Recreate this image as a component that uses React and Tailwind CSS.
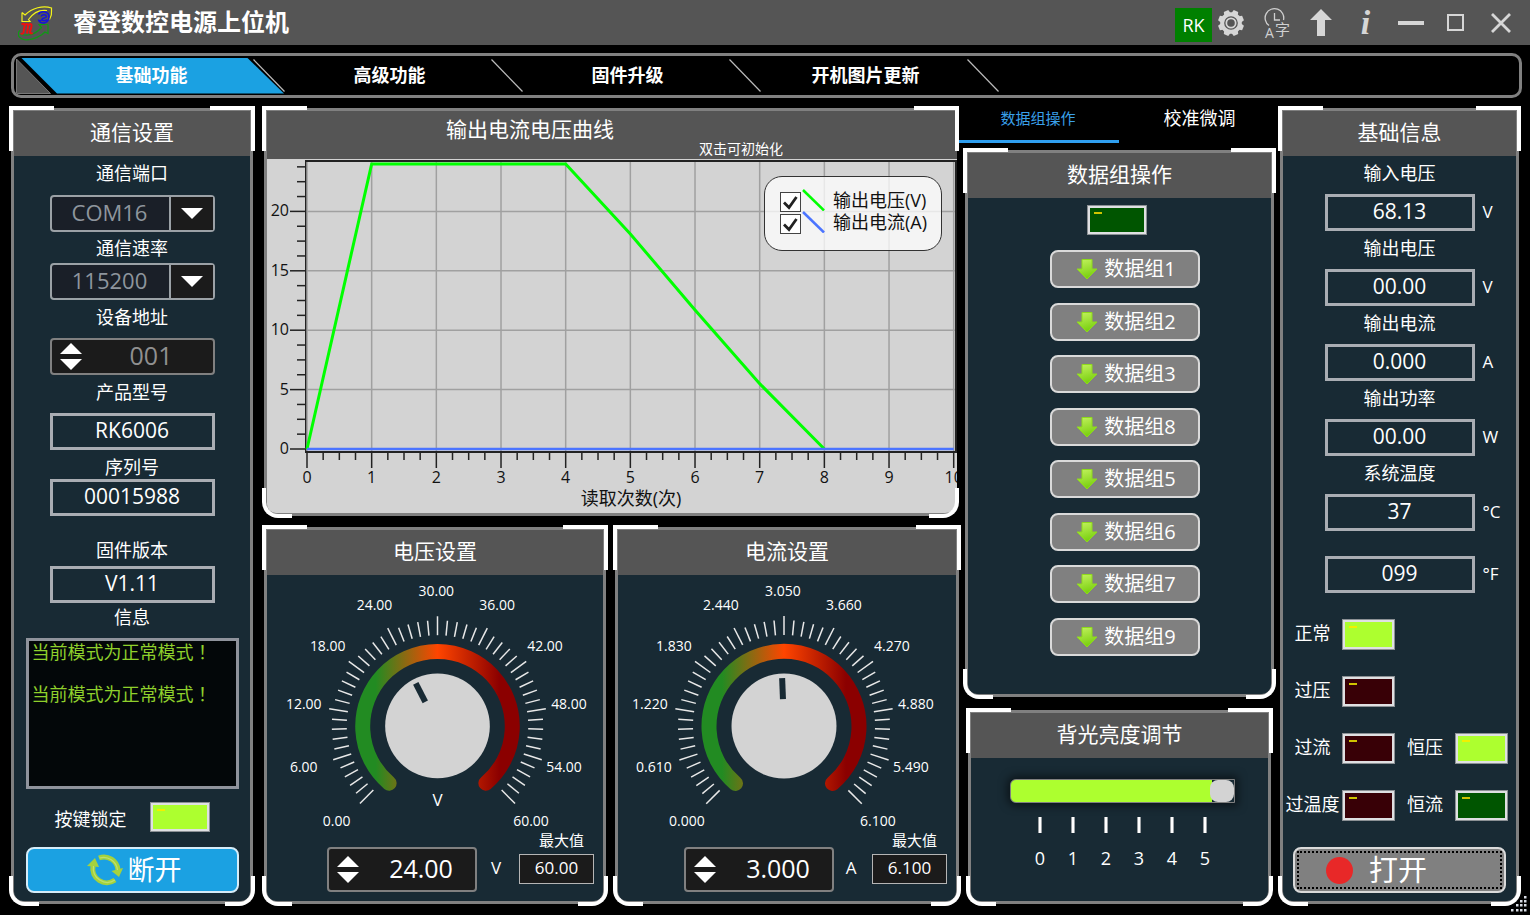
import React, { useState } from "react";

const tabs = ["基础功能", "高级功能", "固件升级", "开机图片更新"];
const groups = [1, 2, 3, 8, 5, 6, 7, 9];

const readings = [
  { id: "vin", label: "输入电压", value: "68.13", unit: "V" },
  { id: "vout", label: "输出电压", value: "00.00", unit: "V" },
  { id: "iout", label: "输出电流", value: "0.000", unit: "A" },
  { id: "pout", label: "输出功率", value: "00.00", unit: "W" },
  { id: "temp", label: "系统温度", value: "37", unit: "°C" },
];

const voltageCurve = [
  [0, 0], [1, 24], [2, 24], [3, 24], [4, 24], [5, 18.1], [6, 11.7], [7, 5.5], [8, 0],
];

/* ---------- icons ---------- */

const Logo = () => (
  <svg viewBox="0 0 36 36" className="w-9 h-9 shrink-0" fill="none" strokeWidth="1.2">
    <path d="M4 7.5V16.5H12L10.5 14.5C15 8 22 4.5 29 5.5M4 7.5L7 10C14 3 25 0 33.5 3V6C34 9 33 12 31.5 14.5" stroke="#f4f41a" />
    <path d="M30 19.5V28.5L27 27C21 33 8 37 3 33.5C-1 31 0 27 2 25.5M30 19.5H21L23.5 22.5C19 28 12 31.5 2.5 29.5" stroke="#0f9a14" />
    <path d="M20.5 9.5C21.5 6.5 27 5.5 30 8.5C32.5 12 30.5 17 26.5 18C23 18.5 20.5 16.5 20.5 14.5M23 11.5C24 9 28 9 28.5 11.5C28.5 13.5 24 12.5 24 14.5C25 16.5 28 15.5 29 14.5M21 17L24 14.5" stroke="#1414dc" strokeWidth="1.5" />
    <path d="M3.5 19.5C6 18 7 19 6.5 21.5L5.5 27.5C5 29 3.5 29 3 28M7 20C9 18 10.5 19.5 10 21.5L9 28.5M10.5 20C12.5 18 14 19 13.5 21.5L12 27C12 29 13.5 29 14.5 27.5" stroke="#ec1010" strokeWidth="2" />
  </svg>
);

const Gear = () => (
  <svg viewBox="0 0 28 28" className="w-7 h-7" fill="#d6d6d6">
    {[22.5, 67.5, 112.5, 157.5].map((a) => (
      <path key={a} d="M10.8 4L11.6 1H16.4L17.2 4V24L16.4 27H11.6L10.8 24Z" transform={`rotate(${a} 14 14)`} />
    ))}
    <circle cx="14" cy="14" r="10.8" />
    <circle cx="14" cy="14" r="6.2" fill="none" stroke="#555" strokeWidth="1.3" />
    <circle cx="14" cy="14" r="3.8" fill="#555" />
  </svg>
);

const Language = () => (
  <svg viewBox="0 0 30 36" className="w-[30px] h-9" fill="none" stroke="#d0d0d0" strokeWidth="1.3">
    <path d="M8 20.5A9.3 9.3 0 1 1 22.5 15" />
    <path d="M13.5 8V15H19" />
    <text x="4" y="33" fontSize="14" fill="#d0d0d0" stroke="none">A</text>
    <text x="14" y="30" fontSize="15" fill="#d0d0d0" stroke="none">字</text>
  </svg>
);

const DownArrow = () => (
  <svg viewBox="0 0 22 22" className="w-[22px] h-[22px]">
    <defs>
      <linearGradient id="leaf" x1="0" y1="0" x2="0.3" y2="1">
        <stop offset="0" stopColor="#c4f260" />
        <stop offset="1" stopColor="#7ad010" />
      </linearGradient>
    </defs>
    <path d="M6 1.5H16V11H21L11 21L1 11H6Z" fill="url(#leaf)" stroke="#8edb1a" />
  </svg>
);

const Refresh = () => (
  <svg viewBox="0 0 36 32" className="w-9 h-8" fill="none">
    <path d="M28 26A14 14 0 0 1 6 12" stroke="#a5d23c" strokeWidth="5" />
    <path d="M12 4A14 14 0 0 1 31 16" stroke="#a5d23c" strokeWidth="5" />
    <path d="M8 4L12 13L0 12Z" fill="#a5d23c" />
    <path d="M32 23L24.5 17L36 14Z" fill="#a5d23c" />
    <path d="M28 26A14 14 0 0 1 6.5 12M12.5 4A14 14 0 0 1 30.5 16" stroke="#bfe070" strokeWidth="1.2" />
  </svg>
);

/* ---------- shared parts ---------- */

const Panel = ({ title, header, className = "", rightEdge = "-right-[5px]", children }) => (
  <section className={`relative flex flex-col border-3 border-[#808080] rounded-b-xl bg-[#182a34] ${className}`}>
    {header || (
      <h2 className="h-[45px] shrink-0 bg-[#555] flex items-center justify-center pb-1 text-[21px] leading-8">{title}</h2>
    )}
    {children}
    <span className="absolute pointer-events-none -top-[5px] -left-[5px] w-[45px] h-[45px] border-t-4 border-l-4 border-white" />
    <span className={`absolute pointer-events-none -top-[5px] w-[45px] h-[45px] border-t-4 border-r-4 border-white ${rightEdge}`} />
    <span className="absolute pointer-events-none -bottom-[5px] -left-[5px] w-[30px] h-[30px] border-b-4 border-l-4 border-white rounded-bl-2xl" />
    <span className={`absolute pointer-events-none -bottom-[5px] w-[30px] h-[30px] border-b-4 border-r-4 border-white rounded-br-2xl ${rightEdge}`} />
  </section>
);

const Readout = ({ id, value, label, className = "" }) => (
  <input
    id={id}
    aria-label={label}
    readOnly
    defaultValue={value}
    className={`h-[37px] min-w-0 border-3 border-[#a9adb3] bg-transparent pb-[3px] text-center text-[21px] outline-none ${className}`}
  />
);

const ledColors = {
  on: "bg-[#adff2f]",
  green: "bg-[#005500]",
  red: "bg-[#380006]",
};

const Led = ({ state, className = "" }) => (
  <span className={`block border-3 border-[#dfe0e2] outline-1 -outline-offset-1 outline-[#8b9094] p-1 ${ledColors[state]} ${className}`}>
    <span className={`block w-2 h-0.5 ${state === "on" ? "bg-[#f2f000]" : "bg-[#cfc400]"}`} />
  </span>
);

const PortSelect = ({ id, value, className }) => (
  <div className={`grid w-[165px] ${className}`}>
    <select
      id={id}
      className="col-start-1 row-start-1 h-[37px] appearance-none rounded border-2 border-[#9ba1a6] bg-[#1a1f28] pb-1 pr-[45px] text-center [text-align-last:center] text-[22px] leading-7 text-[#8e959d]"
    >
      <option>{value}</option>
    </select>
    <span className="col-start-1 row-start-1 justify-self-end self-center pointer-events-none mr-0.5 w-11 h-[33px] border-l-2 border-[#9ba1a6] bg-[#1b1b1b] flex items-center justify-center">
      <svg viewBox="0 0 22 11" className="w-[22px] h-[11px]"><path d="M0 0H22L11 11Z" fill="#fff" /></svg>
    </span>
  </div>
);

const SpinBox = ({ id, value, label, className = "", disabled }) => (
  <div className={`flex rounded border-2 border-[#808080] bg-[#1b1b1b] ${className}`}>
    <div className="w-[38px] shrink-0 flex flex-col items-center justify-center gap-[5px]">
      <button type="button" aria-label={`${label} +`}>
        <svg viewBox="0 0 22 11" className="block w-[22px] h-[11px]"><path d="M0 11H22L11 0Z" fill="#fff" /></svg>
      </button>
      <button type="button" aria-label={`${label} -`}>
        <svg viewBox="0 0 22 11" className="block w-[22px] h-[11px]"><path d="M0 0H22L11 11Z" fill="#fff" /></svg>
      </button>
    </div>
    <input
      id={id}
      aria-label={label}
      defaultValue={value}
      className={`min-w-0 flex-1 bg-transparent pb-1 text-center text-[25px] leading-8 outline-none ${disabled ? "text-[#909090]" : "text-white"}`}
    />
  </div>
);

/* ---------- chart ---------- */

const X0 = 40;
const Y0 = 290;
const px = (x) => X0 + x * 64.67;
const py = (v) => Y0 - v * 11.88;

const Chart = () => (
  <svg viewBox="0 0 690 354" className="block w-full" fontSize="16" fill="#111">
    <rect x="39" y="2" width="650" height="291" fill="#d3d3d3" stroke="#222" strokeWidth="2" />
    <g stroke="#a0a0a0" strokeWidth="1.5">
      {[...Array(11).keys()].map((i) => <line key={i} x1={px(i)} x2={px(i)} y1="3" y2="292" />)}
      {[5, 10, 15, 20].map((v) => <line key={v} x1="40" x2="688" y1={py(v)} y2={py(v)} />)}
    </g>
    <g stroke="#222" strokeWidth="1.5">
      {[...Array(41).keys()].map((i) => (
        <line key={i} x1={px(i / 4)} x2={px(i / 4)} y1="294" y2={i % 4 ? 301 : 309} />
      ))}
      {[...Array(20).keys()].map((i) => (
        <line key={i} x1={i % 4 ? 30 : 23} x2="38" y1={py(i * 1.25)} y2={py(i * 1.25)} />
      ))}
    </g>
    <g textAnchor="middle">
      {[...Array(11).keys()].map((i) => <text key={i} x={px(i)} y="324">{i}</text>)}
    </g>
    <g textAnchor="end">
      {[0, 5, 10, 15, 20].map((v) => <text key={v} x="22" y={py(v) + 5}>{v}</text>)}
    </g>
    <polyline points={voltageCurve.map(([x, v]) => `${px(x)},${py(v)}`).join(" ")} fill="none" stroke="#00ff00" strokeWidth="3" />
    <line x1={px(0)} x2={px(10)} y1={py(0)} y2={py(0)} stroke="#4b74ff" strokeWidth="2.5" />
    <text x="364" y="346" fontSize="18" textAnchor="middle">读取次数(次)</text>
  </svg>
);

const LegendItem = ({ label, color }) => (
  <label className="flex items-center h-[22px]">
    <span className="grid mt-[3px]">
      <input type="checkbox" defaultChecked className="peer col-start-1 row-start-1 appearance-none w-[21px] h-5 border border-[#444] bg-white" />
      <svg viewBox="0 0 21 20" className="col-start-1 row-start-1 w-[21px] h-5 pointer-events-none hidden peer-checked:block">
        <path d="M4 10.500L9 15.500L16.500 5" fill="none" stroke="#222" strokeWidth="2.800" />
      </svg>
    </span>
    <svg viewBox="0 0 24 22" className="w-6 h-[22px]">
      <path d="M2 1L23 21.500" stroke={color} strokeWidth="2.500" />
    </svg>
    <span className="ml-2 text-lg leading-[22px] text-[#111]">{label}</span>
  </label>
);

const ChartPanel = () => (
  <Panel
    className="border-r-0 !bg-[#d3d3d3]"
    rightEdge="-right-[2px]"
    header={
      <div className="h-12 shrink-0 bg-[#555] flex">
        <h2 className="pl-[179px] text-[21px] leading-9">输出电流电压曲线</h2>
        <span className="self-end ml-[85px] text-sm leading-5">双击可初始化</span>
      </div>
    }
  >
    <div className="relative">
      <Chart />
      <div className="absolute top-[17px] right-[15px] w-[178px] h-[75px] rounded-[18px] border border-[#333] bg-white/75 pl-[15px] pt-3">
        <LegendItem label="输出电压(V)" color="#00ff00" />
        <LegendItem label="输出电流(A)" color="#4b74ff" />
      </div>
    </div>
  </Panel>
);

/* ---------- dials ---------- */

// text starts for the 11 scale labels, relative to the dial centre
const labelSpots = [
  [-115, 95], [-148, 41], [-152, -22], [-128, -80], [-81, -121], [-19, -135],
  [42, -121], [90, -80], [114, -22], [109, 41], [76, 95],
];

const Dial = ({ id, cx, value, max, digits, unit }) => (
  <svg viewBox={`${-cx} -151 337 255`} className="block w-[337px] h-[255px] max-w-full" fill="#fff" fontSize="14">
    <defs>
      <linearGradient id={id} gradientUnits="userSpaceOnUse" x1="-62" x2="62" y1="0" y2="0">
        <stop offset="0" stopColor="#228b22" />
        <stop offset="0.5" stopColor="#ff4500" />
        <stop offset="1" stopColor="#8b0000" />
      </linearGradient>
    </defs>
    {[...Array(51).keys()].map((i) => (
      <line
        key={i}
        y1="-91"
        y2={i % 5 ? -106 : -110}
        stroke="#e8e8e8"
        strokeWidth="1.5"
        transform={`rotate(${-135 + i * 5.4})`}
      />
    ))}
    <path d="M-48.500 57.500A75 75 0 1 1 48.500 57.500" fill="none" stroke={`url(#${id})`} strokeWidth="15" strokeLinecap="round" />
    <circle r="52.500" fill="#d3d3d3" />
    <rect x="-3" y="-48" width="6" height="21" fill="#182a34" transform={`rotate(${-135 + (value / max) * 270})`} />
    {labelSpots.map(([x, y], i) => (
      <text key={i} x={x} y={y + 5}>{((max / 10) * i).toFixed(digits)}</text>
    ))}
    {unit && <text x="0" y="80" fontSize="17" textAnchor="middle">{unit}</text>}
  </svg>
);

const DialPanel = ({ title, id, cx, value, max, digits, unit, dialUnit, unitWidth }) => (
  <Panel title={title}>
    <Dial id={`${id}-arc`} cx={cx} value={value} max={max} digits={digits} unit={dialUnit} />
    <div className="flex justify-end items-end pr-[9px]">
      <SpinBox id={id} label={title} value={value.toFixed(digits)} className="w-[150px] h-[45px]" />
      <span className={`pb-3 pr-1 text-center text-[17px] leading-6 ${unitWidth}`}>{unit}</span>
      <div className="flex flex-col pb-2">
        <label htmlFor={`${id}-max`} className="self-end pr-[10px] text-[15px] leading-5">最大值</label>
        <input
          id={`${id}-max`}
          defaultValue={max.toFixed(digits)}
          className="mt-1 w-[75px] h-[30px] border border-[#b5b5b5] bg-[#1b1b1b] pb-1 text-center text-[17px] outline-none"
        />
      </div>
    </div>
  </Panel>
);

/* ---------- columns ---------- */

const CommPanel = () => {
  const label = "text-lg leading-6";
  return (
    <Panel title="通信设置" className="mr-[11px]">
      <div className="flex flex-col items-center">
        <label htmlFor="port" className={`${label} mt-[5px]`}>通信端口</label>
        <PortSelect id="port" value="COM16" className="mt-[10px]" />
        <label htmlFor="baud" className={`${label} mt-1`}>通信速率</label>
        <PortSelect id="baud" value="115200" className="mt-[3px]" />
        <label htmlFor="addr" className={`${label} mt-[5px]`}>设备地址</label>
        <SpinBox id="addr" label="设备地址" value="001" disabled className="mt-[9px] w-[165px] h-[37px]" />
        <label htmlFor="model" className={`${label} mt-[5px]`}>产品型号</label>
        <Readout id="model" value="RK6006" className="mt-[9px] w-[165px]" />
        <label htmlFor="serial" className={`${label} mt-[5px]`}>序列号</label>
        <Readout id="serial" value="00015988" className="w-[165px]" />
        <label htmlFor="firmware" className={`${label} mt-[22px]`}>固件版本</label>
        <Readout id="firmware" value="V1.11" className="mt-1 w-[165px]" />
        <label htmlFor="log" className={`${label} mt-[2px]`}>信息</label>
        <textarea
          id="log"
          readOnly
          defaultValue={"当前模式为正常模式！\n\n当前模式为正常模式！"}
          className="mt-[9px] w-[213px] h-[151px] resize-none overflow-hidden border-3 border-[#8f939c] bg-[#030709] px-[3px] font-['Noto_Sans_CJK_TC',sans-serif] text-lg leading-[21px] text-[#8fd02c] outline-none"
        />
        <div className="mt-[13px] flex items-center gap-[23px]">
          <span className="pt-1 text-lg leading-6">按键锁定</span>
          <Led state="on" className="w-[60px] h-[30px]" />
        </div>
        <button className="mt-[15px] w-[213px] h-[46px] rounded-lg border-2 border-[#d5ecf8] bg-[#1ba1e2] flex items-center justify-center gap-[5px] pl-1 text-[27px] leading-8">
          <Refresh />
          断开
        </button>
      </div>
    </Panel>
  );
};

const GroupColumn = () => {
  const [level, setLevel] = useState(5);
  return (
    <div className="flex flex-col mr-1 -mt-[11px]">
      <div role="tablist" className="flex h-[46px]">
        <button role="tab" aria-selected="true" className="w-[162px] border-b-3 border-[#2f9ff0] text-[15px] text-[#3aa0ea]">数据组操作</button>
        <button role="tab" aria-selected="false" className="flex-1 pb-1 pl-1 text-lg">校准微调</button>
      </div>

      <Panel title="数据组操作" className="mt-[7px] ml-2 mr-[2px] h-[547px]">
        <Led state="green" className="self-center mt-[7px] mr-[5px] w-[60px] h-[30px]" />
        <div className="flex-1 flex flex-col items-center justify-between mt-[15px] mb-[38px] pl-[10px]">
          {groups.map((n) => (
            <button
              key={n}
              className="w-[150px] h-[38px] rounded-lg border-2 border-[#dadada] bg-[#808080] flex items-center justify-center gap-[6px] pl-[3px] text-xl leading-6"
            >
              <DownArrow />
              数据组{n}
            </button>
          ))}
        </div>
      </Panel>

      <Panel title="背光亮度调节" className="flex-1 mt-[13px] ml-[11px] mr-[5px]">
        <div className="flex flex-col items-center pl-[6px]">
          <input
            type="range"
            min="0"
            max="5"
            value={level}
            aria-label="背光亮度调节"
            onChange={(e) => setLevel(Number(e.target.value))}
            className="mt-[21px] w-[225px] h-6 appearance-none border border-[#808080] rounded-l-md bg-[linear-gradient(to_right,#adff2f_90%,#182a34_90%)] shadow-[0_0_8px_3px_rgba(0,0,0,0.5)] [&::-webkit-slider-thumb]:appearance-none [&::-webkit-slider-thumb]:w-6 [&::-webkit-slider-thumb]:h-[22px] [&::-webkit-slider-thumb]:rounded-lg [&::-webkit-slider-thumb]:bg-[#d3d3d3]"
          />
          <div className="grid grid-cols-[repeat(6,33px)] mt-[14px]">
            {[0, 1, 2, 3, 4, 5].map((n) => (
              <div key={n} className="flex flex-col items-center">
                <span className="w-1 h-4 bg-white border-x border-[#9a9fa3]" />
                <span className="mt-[13px] text-lg leading-6">{n}</span>
              </div>
            ))}
          </div>
        </div>
      </Panel>
    </div>
  );
};

const InfoPanel = () => (
  <Panel title="基础信息">
    <div className="grid grid-cols-[1fr_150px_1fr] items-center">
      {readings.map((r) => (
        <React.Fragment key={r.id}>
          <label htmlFor={r.id} className="col-span-3 mt-[5px] mb-[9px] text-center text-lg leading-6">{r.label}</label>
          <Readout id={r.id} value={r.value} className="col-start-2" />
          <span className="pb-[2px] pl-2 text-[17px] leading-6">{r.unit}</span>
        </React.Fragment>
      ))}
      <Readout id="tempf" label="°F" value="099" className="col-start-2 mt-[25px]" />
      <span className="mt-[25px] pb-[2px] pl-2 text-[17px] leading-6">°F</span>
    </div>

    <div className="grid grid-cols-[59px_53px_60px_53px] gap-y-[26px] mt-[26px] items-center text-center text-lg leading-6 whitespace-nowrap">
      <span className="justify-self-center pb-[3px]">正常</span>
      <Led state="on" className="h-[31px]" />
      <span className="col-start-1 pb-[3px]">过压</span>
      <Led state="red" className="h-[31px]" />
      <span className="col-start-1 pb-[3px]">过流</span>
      <Led state="red" className="h-[31px]" />
      <span className="pb-[3px]">恒压</span>
      <Led state="on" className="h-[31px]" />
      <span className="col-start-1 pb-[3px]">过温度</span>
      <Led state="red" className="h-[31px]" />
      <span className="pb-[3px]">恒流</span>
      <Led state="green" className="h-[31px]" />
    </div>

    <button className="self-center mt-[26px] w-[213px] h-[46px] rounded-lg border-2 border-[#dadada] bg-[#808080] p-0.5">
      <span className="h-full flex items-center gap-4 pl-[27px] border-2 border-dotted border-black text-[29px] leading-9">
        <span className="w-[27px] h-[27px] rounded-full bg-[#e82828]" />
        打开
      </span>
    </button>
  </Panel>
);

const TitleBar = () => {
  const btn = "w-[45px] h-full flex items-center justify-center";
  return (
    <header className="h-[45px] shrink-0 bg-[#555] flex items-center pl-[18px] pr-[7px]">
      <Logo />
      <h1 className="ml-[19px] pb-[2px] text-2xl font-bold">睿登数控电源上位机</h1>
      <button className="ml-auto mt-1 w-[37px] h-[34px] bg-[#008000] text-lg">RK</button>
      <button aria-label="设置" className="mr-1 w-[37px] h-full flex items-center justify-center"><Gear /></button>
      <button aria-label="语言" className={btn}><Language /></button>
      <button aria-label="升级" className={btn}>
        <svg viewBox="0 0 22 28" className="w-[22px] h-7"><path d="M11 0L22 11H15V27H7V11H0Z" fill="#d6d6d6" /></svg>
      </button>
      <button aria-label="关于" className={`${btn} font-['Liberation_Serif',serif] italic font-bold text-[34px] leading-8 text-[#d6d6d6]`}>i</button>
      <button aria-label="最小化" className={btn}><span className="w-[26px] h-1 bg-[#d6d6d6]" /></button>
      <button aria-label="最大化" className={btn}><span className="w-[17px] h-[17px] border-2 border-[#d6d6d6]" /></button>
      <button aria-label="关闭" className={btn}>
        <svg viewBox="0 0 20 20" className="w-5 h-5"><path d="M1 1L19 19M19 1L1 19" stroke="#d6d6d6" strokeWidth="2.8" /></svg>
      </button>
    </header>
  );
};

const TabBar = () => (
  <nav className="mt-2 ml-[11px] mr-2 h-[45px] shrink-0 rounded-[10px] border-3 border-[#808080] flex items-center overflow-hidden">
    <svg viewBox="0 0 35 36" className="ml-[2px] -mr-[30px] w-[35px] h-9 shrink-0">
      <path d="M0.5 1V35.5H34.5Z" fill="#555" stroke="#777" />
    </svg>
    <ul className="flex">
      {tabs.map((t, i) => (
        <li key={t} className="w-[238px] flex items-center">
          <button
            className={`w-[263px] h-9 shrink-0 pb-[2px] pr-[2px] text-lg font-bold [clip-path:polygon(0_0,226px_0,100%_100%,36px_100%)] ${i === 0 ? "bg-[#1ba1e2]" : ""}`}
          >
            {t}
          </button>
          <svg viewBox="0 0 32 33" className="-ml-[31px] w-8 h-[33px] shrink-0">
            <path d="M0.5 0.5L31.5 32.5" stroke="#bbb" strokeWidth="1.2" />
          </svg>
        </li>
      ))}
    </ul>
  </nav>
);

const App = () => (
  <div className="relative min-h-screen bg-black text-white flex flex-col font-['Open_Sans','Noto_Sans_CJK_SC',sans-serif]">
    <TitleBar />
    <TabBar />
    <main className="flex-1 grid grid-cols-[253fr_693fr_323fr_239fr] pl-[11px] pr-[11px] pt-[10px] pb-[11px]">
      <CommPanel />
      <div className="flex flex-col min-w-0">
        <ChartPanel />
        <div className="mt-[11px] -mr-[2px] flex-1 grid grid-cols-[342fr_344fr] gap-[9px]">
          <DialPanel id="volt" title="电压设置" cx={171} value={24} max={60} digits={2} unit="V" dialUnit="V" unitWidth="w-[42px]" />
          <DialPanel id="curr" title="电流设置" cx={166} value={3} max={6.1} digits={3} unit="A" unitWidth="w-[38px]" />
        </div>
      </div>
      <GroupColumn />
      <InfoPanel />
    </main>
    <svg viewBox="0 0 16 16" className="absolute right-[3px] bottom-[3px] w-4 h-4 pointer-events-none" fill="#d8dce4">
      {[[13, 0], [9, 4], [13, 4], [5, 8], [9, 8], [13, 8], [0, 13], [5, 13], [9, 13], [13, 13]].map(([x, y]) => (
        <rect key={`${x}-${y}`} x={x} y={y} width="2.5" height="2.5" />
      ))}
    </svg>
  </div>
);

export default App;
